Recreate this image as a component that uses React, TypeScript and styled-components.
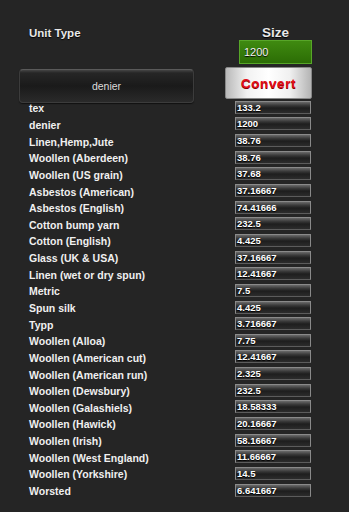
import React from "react";
import styled, { createGlobalStyle } from "styled-components";

const GlobalStyle = createGlobalStyle`
  html, body {
    margin: 0;
    padding: 0;
    background: #252525;
  }
  body {
    font-family: "Liberation Sans", Arial, sans-serif;
    color: #fff;
  }
`;

const rows: [string, string][] = [
  ["tex", "133.2"],
  ["denier", "1200"],
  ["Linen,Hemp,Jute", "38.76"],
  ["Woollen (Aberdeen)", "38.76"],
  ["Woollen (US grain)", "37.68"],
  ["Asbestos (American)", "37.16667"],
  ["Asbestos (English)", "74.41666"],
  ["Cotton bump yarn", "232.5"],
  ["Cotton (English)", "4.425"],
  ["Glass (UK & USA)", "37.16667"],
  ["Linen (wet or dry spun)", "12.41667"],
  ["Metric", "7.5"],
  ["Spun silk", "4.425"],
  ["Typp", "3.716667"],
  ["Woollen (Alloa)", "7.75"],
  ["Woollen (American cut)", "12.41667"],
  ["Woollen (American run)", "2.325"],
  ["Woollen (Dewsbury)", "232.5"],
  ["Woollen (Galashiels)", "18.58333"],
  ["Woollen (Hawick)", "20.16667"],
  ["Woollen (Irish)", "58.16667"],
  ["Woollen (West England)", "11.66667"],
  ["Woollen (Yorkshire)", "14.5"],
  ["Worsted", "6.641667"],
];

const Page = styled.div`
  width: 349px;
  height: 512px;
  background: #252525;
  overflow: hidden;
  box-sizing: border-box;
  padding-top: 26px;
`;

const Header = styled.div`
  display: grid;
  grid-template-columns: 210px 73px;
  align-items: end;
  padding-left: 29px;
`;

const UnitTitle = styled.div`
  font-weight: bold;
  font-size: 11.5px;
  color: #e8e8e8;
  text-shadow: 0 1px 1px #000;
  line-height: 14px;
`;

const SizeColumn = styled.div`
  display: flex;
  flex-direction: column;
  align-items: center;
`;

const SizeTitle = styled.div`
  font-weight: bold;
  font-size: 13.5px;
  color: #e8e8e8;
  text-shadow: 0 1px 1px #000;
  line-height: 14px;
  margin-bottom: 0;
`;

const SizeInput = styled.div`
  width: 73px;
  height: 24px;
  box-sizing: border-box;
  background: linear-gradient(#3f8a10, #2c6d05);
  border: 1px solid #57a628;
  font-size: 11px;
  color: #f2f2f2;
  text-shadow: 0 1px 1px #000;
  display: flex;
  align-items: center;
  padding-left: 4px;
`;

const Controls = styled.div`
  display: flex;
  align-items: flex-start;
  padding-left: 19px;
  margin-top: 3px;
`;

const UnitSelect = styled.div`
  width: 175px;
  height: 34px;
  box-sizing: border-box;
  margin-top: 2px;
  border-radius: 4px;
  border: 1px solid #3c3c3c;
  border-top-color: #5a5a5a;
  background: linear-gradient(#444 0px, #262626 3px, #1a1a1a 50%, #2a2a2a 100%);
  box-shadow: 0 1px 1px #111;
  display: flex;
  align-items: center;
  justify-content: center;
  font-size: 10.5px;
  color: #dcdcdc;
`;

const ConvertButton = styled.div`
  margin-left: 31px;
  width: 87px;
  height: 32px;
  box-sizing: border-box;
  border-radius: 2px;
  border: 1px solid #888;
  background: linear-gradient(90deg, #b9b9b9 0%, #f2f2f2 25%, #ffffff 50%, #f0f0f0 75%, #b4b4b4 100%);
  display: flex;
  align-items: center;
  justify-content: center;
  font-weight: bold;
  font-size: 13.5px;
  letter-spacing: 0.6px;
  color: #e3101a;
  text-shadow: 0 1px 0 #800;
`;

const List = styled.div`
  display: flex;
  flex-direction: column;
  padding-left: 29px;
  margin-top: -4px;
`;

const Row = styled.div`
  display: grid;
  grid-template-columns: 206px 76px;
  align-items: center;
  height: 16.65px;
`;

const Label = styled.div`
  font-weight: bold;
  font-size: 10.5px;
  color: #f0f0f0;
  white-space: nowrap;
  padding-top: 2px;
`;

const Value = styled.div`
  height: 13px;
  box-sizing: border-box;
  border: 1px solid #8a8a8a;
  border-bottom-color: #5c5c5c;
  background: linear-gradient(#6a6a6a 0%, #3a3a3a 30%, #1e1e1e 55%, #2c2c2c 100%);
  font-weight: bold;
  font-size: 9.5px;
  line-height: 11px;
  color: #fff;
  text-shadow: 0 1px 1px #000;
  padding-left: 1px;
  overflow: hidden;
`;

export default function App() {
  return (
    <Page>
      <GlobalStyle />
      <Header>
        <UnitTitle>Unit Type</UnitTitle>
        <SizeColumn>
          <SizeTitle>Size</SizeTitle>
        </SizeColumn>
      </Header>
      <Header>
        <div />
        <SizeColumn>
          <SizeInput>1200</SizeInput>
        </SizeColumn>
      </Header>
      <Controls>
        <UnitSelect>denier</UnitSelect>
        <ConvertButton>Convert</ConvertButton>
      </Controls>
      <List>
        {rows.map(([name, val]) => (
          <Row key={name}>
            <Label>{name}</Label>
            <Value>{val}</Value>
          </Row>
        ))}
      </List>
    </Page>
  );
}
